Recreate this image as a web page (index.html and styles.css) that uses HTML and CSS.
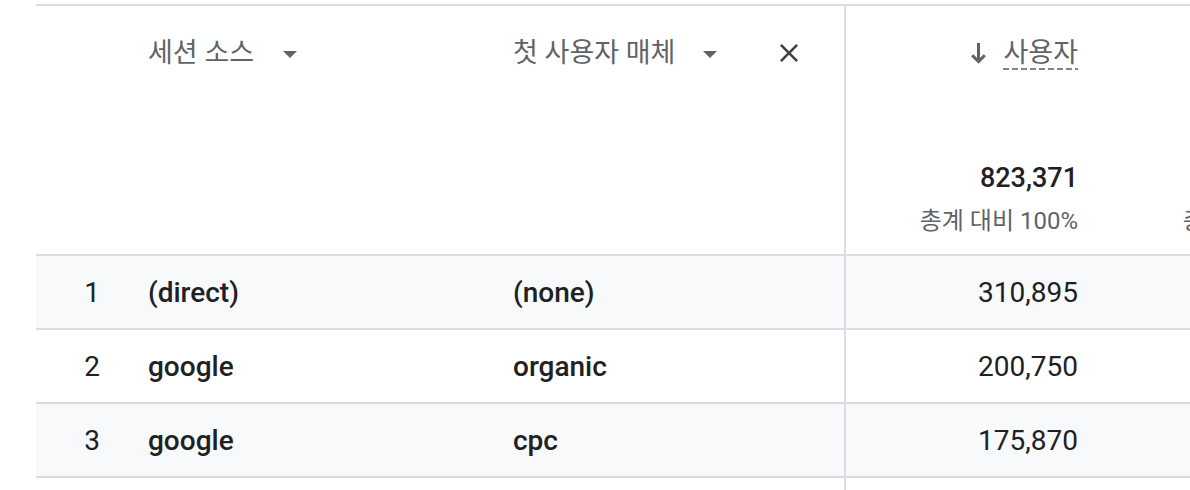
FILE: index.html
```html
<!DOCTYPE html>
<html lang="ko">
<head>
<meta charset="utf-8">
<title>보고서 표</title>
<link rel="stylesheet" href="styles.css">
</head>
<body>
<div class="table">
  <div class="row head">
    <div class="cell idx"></div>
    <div class="cell dim">
      <span class="label">세션 소스</span>
      <svg class="caret caret-a" width="14" height="7" viewBox="0 0 14 7"><polygon points="0,0 14,0 7,7" fill="#5f6368"/></svg>
    </div>
    <div class="cell dim sep">
      <span class="label">첫 사용자 매체</span>
      <svg class="caret caret-b" width="14" height="7" viewBox="0 0 14 7"><polygon points="0,0 14,0 7,7" fill="#5f6368"/></svg>
      <svg class="close" width="18" height="18" viewBox="5 5 14 14"><path d="M19 6.41L17.59 5 12 10.59 6.41 5 5 6.41 10.59 12 5 17.59 6.41 19 12 13.41 17.59 19 19 17.59 13.41 12z" fill="#3c4043"/></svg>
    </div>
    <div class="cell metric">
      <div class="mlabel">
        <svg class="arrow" width="15" height="21" viewBox="0 0 15 21"><path d="M7.5 0V18.5" stroke="#5f6368" stroke-width="3" fill="none"/><path d="M1.2 12.3L7.5 18.6L13.8 12.3" stroke="#5f6368" stroke-width="3" fill="none"/></svg>
        <span class="dashed">사용자</span>
      </div>
      <div class="totals">
        <div class="total">823,371</div>
        <div class="pct">총계 대비 100%</div>
      </div>
    </div>
    <div class="cell metric">
      <div class="totals">
        <div class="pct">총계 대비 100%</div>
      </div>
    </div>
  </div>

  <div class="row data alt">
    <div class="cell idx">1</div>
    <div class="cell src">(direct)</div>
    <div class="cell src sep">(none)</div>
    <div class="cell val">310,895</div>
    <div class="cell val"></div>
  </div>
  <div class="row data">
    <div class="cell idx">2</div>
    <div class="cell src">google</div>
    <div class="cell src sep">organic</div>
    <div class="cell val">200,750</div>
    <div class="cell val"></div>
  </div>
  <div class="row data alt">
    <div class="cell idx">3</div>
    <div class="cell src">google</div>
    <div class="cell src sep">cpc</div>
    <div class="cell val">175,870</div>
    <div class="cell val"></div>
  </div>
  <div class="row data">
    <div class="cell idx"></div>
    <div class="cell src"></div>
    <div class="cell src sep"></div>
    <div class="cell val"></div>
    <div class="cell val"></div>
  </div>
</div>
</body>
</html>
```

FILE: styles.css
```css
html, body {
  margin: 0;
  background: #ffffff;
  overflow: hidden;
}

body {
  font-family: Roboto, "Noto Sans CJK KR", sans-serif;
  color: #202124;
}

.table {
  margin: 4px 0 0 36px;
  width: 1329px;
  border-top: 2px solid #dadce0;
}

.row {
  display: grid;
  grid-template-columns: 112px 365px 333px 256px 263px;
  border-bottom: 2px solid #dadce0;
}

.row.alt {
  background: #f8f9fa;
}

.head {
  height: 248px;
}

.sep {
  border-right: 2px solid #dadce0;
}

.head .cell {
  padding-top: 32px;
  box-sizing: border-box;
}

.dim {
  display: flex;
  align-items: flex-start;
}

.label {
  font-size: 27px;
  line-height: 30px;
  color: #5f6368;
  white-space: nowrap;
}

.caret {
  margin-top: 13px;
  flex: none;
}

.caret-a {
  margin-left: 29px;
}

.caret-b {
  margin-left: 28px;
}

.close {
  margin-left: auto;
  margin-right: 46px;
  margin-top: 6px;
  flex: none;
}

.metric {
  display: flex;
  flex-direction: column;
  align-items: flex-end;
  padding-right: 24px;
}

.head .metric {
  padding-bottom: 20px;
}

.mlabel {
  display: flex;
  align-items: center;
  gap: 17px;
}

.arrow {
  margin-top: -2px;
  flex: none;
}

.dashed {
  font-size: 27px;
  line-height: 30px;
  color: #5f6368;
  padding-bottom: 2px;
  background-image: repeating-linear-gradient(to right, #80868b 0 6px, transparent 6px 9px);
  background-size: 100% 2px;
  background-position: left bottom;
  background-repeat: no-repeat;
}

.totals {
  margin-top: auto;
  display: flex;
  flex-direction: column;
  align-items: flex-end;
}

.total {
  font-size: 27px;
  line-height: 32px;
  font-weight: 500;
  color: #202124;
}

.pct {
  margin-top: 12px;
  font-size: 24px;
  line-height: 28px;
  color: #5f6368;
  white-space: nowrap;
  position: relative;
  top: 1px;
}

.data {
  height: 72px;
}

.data .cell {
  display: flex;
  align-items: center;
  font-size: 28px;
  white-space: nowrap;
}

.data .idx {
  justify-content: center;
  color: #202124;
}

.data .src {
  font-weight: 500;
  color: #202124;
}

.data .val {
  justify-content: flex-end;
  padding-right: 24px;
  color: #202124;
}
```
